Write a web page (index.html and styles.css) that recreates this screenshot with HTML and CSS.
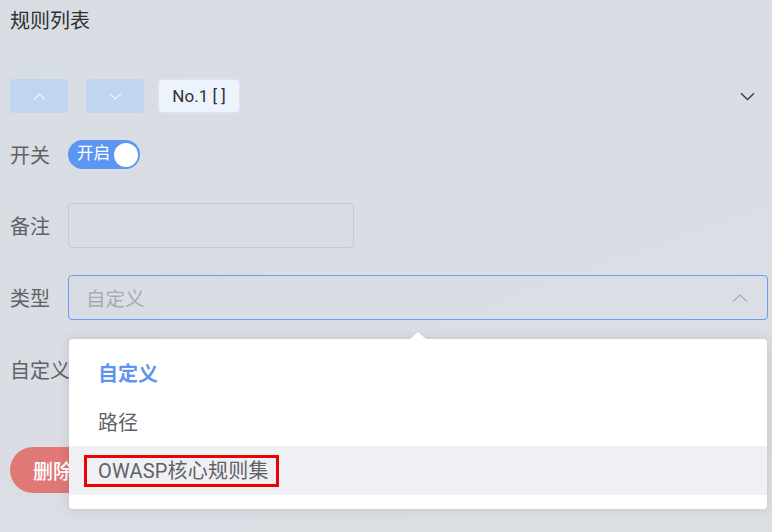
FILE: index.html
```html
<!DOCTYPE html>
<html lang="zh-CN">
<head>
<meta charset="utf-8">
<title>规则列表</title>
<link rel="stylesheet" href="styles.css">
</head>
<body>
<div class="page">
  <header class="title-bar">规则列表</header>
  <main class="content">
    <div class="toolbar">
      <button class="move-btn" aria-label="上移">
        <svg width="13" height="7" viewBox="0 0 13 7"><path d="M1 6.3 L6.5 1.2 L12 6.3" fill="none" stroke="#eef3fb" stroke-width="1.2"/></svg>
      </button>
      <button class="move-btn" aria-label="下移">
        <svg width="13" height="7" viewBox="0 0 13 7"><path d="M1 0.8 L6.5 5.8 L12 0.8" fill="none" stroke="#eef3fb" stroke-width="1.2"/></svg>
      </button>
      <span class="tag">No.1 [ ]</span>
      <span class="collapse">
        <svg width="15" height="9" viewBox="0 0 15 9"><path d="M1 1.2 L7.5 7.5 L14 1.2" fill="none" stroke="#3a3c40" stroke-width="1.4"/></svg>
      </span>
    </div>

    <div class="row row-switch">
      <label class="label">开关</label>
      <span class="switch"><span class="switch-text">开启</span><span class="knob"></span></span>
    </div>

    <div class="row row-field">
      <label class="label">备注</label>
      <span class="input"></span>
    </div>

    <div class="row row-field">
      <label class="label">类型</label>
      <span class="select">
        <span class="placeholder">自定义</span>
        <svg width="16" height="8" viewBox="0 0 16 8"><path d="M1 7.3 L8 1 L15 7.3" fill="none" stroke="#a8abb2" stroke-width="1.2"/></svg>
      </span>
    </div>

    <div class="row row-field">
      <label class="label label-wide">自定义</label>
    </div>

    <div class="actions">
      <button class="delete-btn">删除</button>
    </div>
  </main>

  <div class="dropdown">
    <span class="dropdown-arrow"></span>
    <ul class="options">
      <li class="option selected">自定义</li>
      <li class="option">路径</li>
      <li class="option hover"><span class="highlight">OWASP核心规则集</span></li>
    </ul>
  </div>
</div>
</body>
</html>
```

FILE: styles.css
```css
* { box-sizing: border-box; }

html, body {
  margin: 0;
  padding: 0;
}

body {
  width: 772px;
  height: 532px;
  overflow: hidden;
  background: #d9dde3;
  font-family: "Roboto", "Noto Sans CJK SC", sans-serif;
  color: #606266;
}

.page {
  position: relative;
  width: 772px;
  height: 532px;
  background: linear-gradient(160deg, #d8dce3 0%, #dadee4 55%, #dcdfe4 100%);
}

.title-bar {
  height: 60px;
  padding: 7px 10px 0;
  font-size: 20px;
  line-height: 28px;
  color: #303133;
  border-bottom: 1px solid #dcdfe5;
}

.content {
  padding: 0 4px 0 10px;
}

.toolbar {
  display: flex;
  align-items: center;
  height: 34px;
  margin-top: 19px;
}

.move-btn {
  width: 58px;
  height: 34px;
  margin: 0 18px 0 0;
  padding: 0;
  border: none;
  border-radius: 4px;
  background: #c1d5f1;
  display: flex;
  align-items: center;
  justify-content: center;
}

.tag {
  height: 34px;
  width: 82px;
  margin-left: -4px;
  border: 1px solid #dae4f3;
  border-radius: 4px;
  background: #edf3fd;
  color: #303133;
  font-size: 17px;
  line-height: 32px;
  text-align: center;
}

.collapse {
  margin-left: auto;
  margin-right: 13px;
  display: flex;
  align-items: center;
}

.row {
  display: flex;
  align-items: center;
}

.label {
  width: 58px;
  flex: none;
  font-size: 20px;
  color: #606266;
  white-space: nowrap;
}

.row-switch {
  height: 29px;
  margin-top: 27px;
}

.row-field {
  height: 45px;
  margin-top: 27px;
}

.row-switch + .row-field {
  margin-top: 34px;
}

.switch {
  position: relative;
  width: 72px;
  height: 29px;
  border-radius: 15px;
  background: #5b97f1;
  display: flex;
  align-items: center;
  padding-left: 9px;
}

.switch-text {
  color: #ffffff;
  font-size: 16.5px;
  line-height: 1;
}

.knob {
  position: absolute;
  right: 2px;
  top: 2.5px;
  width: 24px;
  height: 24px;
  border-radius: 50%;
  background: #ffffff;
}

.input {
  width: 286px;
  height: 45px;
  border: 1px solid #c6cad0;
  border-radius: 4px;
}

.select {
  flex: 1;
  height: 45px;
  border: 1px solid #6a9ef2;
  border-radius: 4px;
  display: flex;
  align-items: center;
  justify-content: space-between;
  padding: 0 19px 0 17px;
}

.placeholder {
  font-size: 19.5px;
  color: #a8abb2;
}

.actions {
  margin-top: 55px;
}

.delete-btn {
  height: 46px;
  padding: 0 24px 0 23px;
  border: none;
  border-radius: 23px;
  background: #e07876;
  color: #ffffff;
  font-family: "Roboto", "Noto Sans CJK SC", sans-serif;
  font-size: 20px;
  font-weight: 500;
}

.dropdown {
  position: absolute;
  left: 69px;
  top: 339px;
  width: 698px;
  height: 170px;
  background: #ffffff;
  border-radius: 4px;
  box-shadow: 0 0 12px rgba(0, 0, 0, 0.12);
}

.dropdown-arrow {
  position: absolute;
  left: 341px;
  top: -7px;
  width: 0;
  height: 0;
  border-left: 8px solid transparent;
  border-right: 8px solid transparent;
  border-bottom: 7px solid #ffffff;
}

.options {
  list-style: none;
  margin: 0;
  padding: 9px 0 14px;
}

.option {
  height: 49px;
  padding-left: 29px;
  display: flex;
  align-items: center;
  font-size: 20px;
  color: #606266;
}

.option.selected {
  color: #5e96ee;
  font-weight: 700;
}

.option.hover {
  background: #eff0f4;
}

.highlight {
  margin-left: -14px;
  padding: 0 7px 0 11px;
  border: 3px solid #f00000;
  line-height: 26px;
  letter-spacing: 0.2px;
}
```
